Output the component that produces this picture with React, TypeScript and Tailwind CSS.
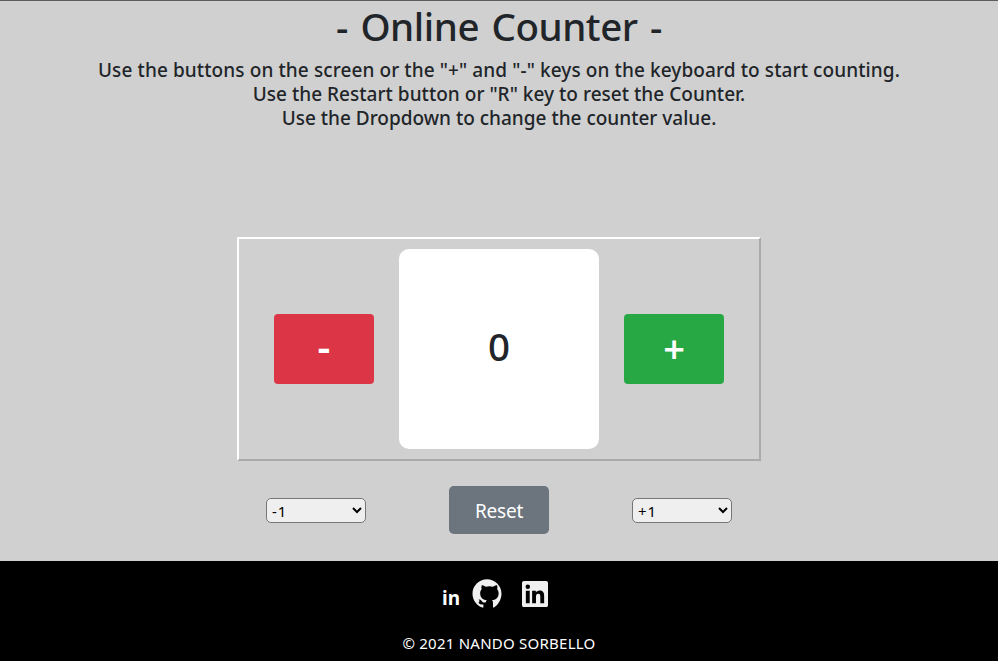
import { useEffect, useState } from "react";

const steps = [1, 2, 5, 10];
const selectClass =
  "h-[25px] w-[100px] rounded-[5px] border border-[#767676] bg-[#efefef] pt-px pl-px text-[15px] tracking-[0.8px] text-black";

function GithubLogo() {
  return (
    <svg viewBox="0 0 24 24" className="mt-px mr-5 h-[29px] w-[30px] text-[#f0f0f0]" fill="currentColor">
      <path d="M12 .297c-6.63 0-12 5.373-12 12 0 5.303 3.438 9.8 8.205 11.385.6.113.82-.258.82-.577 0-.285-.01-1.04-.015-2.04-3.338.724-4.042-1.61-4.042-1.61C6.422 18.07 5.633 17.7 5.633 17.7c-1.087-.744.084-.729.084-.729 1.205.084 1.838 1.236 1.838 1.236 1.07 1.835 2.809 1.305 3.495.998.108-.776.417-1.305.76-1.605-2.665-.3-5.466-1.332-5.466-5.93 0-1.31.465-2.38 1.235-3.22-.135-.303-.54-1.523.105-3.176 0 0 1.005-.322 3.3 1.23.96-.267 1.98-.399 3-.405 1.02.006 2.04.138 3 .405 2.28-1.552 3.285-1.23 3.285-1.23.645 1.653.24 2.873.12 3.176.765.84 1.23 1.91 1.23 3.22 0 4.61-2.805 5.625-5.475 5.92.42.36.81 1.096.81 2.22v3.286c0 .315.21.69.825.57C20.565 22.092 24 17.592 24 12.297c0-6.627-5.373-12-12-12" />
    </svg>
  );
}

function LinkedinLogo() {
  return (
    <svg viewBox="0 0 24 24" className="mt-[3px] size-[26px] text-[#f0f0f0]" fill="currentColor">
      <path d="M20.447 20.452h-3.554v-5.569c0-1.328-.027-3.037-1.852-3.037-1.853 0-2.136 1.445-2.136 2.939v5.667H9.351V9h3.414v1.561h.046c.477-.9 1.637-1.85 3.37-1.85 3.601 0 4.267 2.37 4.267 5.455v6.286zM5.337 7.433a2.062 2.062 0 0 1-2.063-2.065 2.064 2.064 0 1 1 2.063 2.065zm1.782 13.019H3.555V9h3.564v11.452zM22.225 0H1.771C.792 0 0 .774 0 1.729v20.542C0 23.227.792 24 1.771 24h20.451C23.2 24 24 23.227 24 22.271V1.729C24 .774 23.2 0 22.222 0h.003z" />
    </svg>
  );
}

export default function App() {
  const [count, setCount] = useState(0);
  const [down, setDown] = useState(1);
  const [up, setUp] = useState(1);

  useEffect(() => {
    const onKey = (e: KeyboardEvent) => {
      if (e.key === "+") setCount((c) => c + up);
      if (e.key === "-") setCount((c) => c - down);
      if (e.key.toLowerCase() === "r") setCount(0);
    };
    window.addEventListener("keydown", onKey);
    return () => window.removeEventListener("keydown", onKey);
  }, [up, down]);

  return (
    <div className="flex h-screen flex-col overflow-hidden bg-[#d0d0d0] font-['Noto_Sans',sans-serif] text-[#212529]">
      <main className="flex h-[561px] flex-col items-center border-t border-[#5c5c5c] pt-px">
        <h1 className="mb-2 h-12 text-[38.5px] leading-[49px] font-medium tracking-[-0.45px] whitespace-nowrap [word-spacing:2.8px]">
          - Online Counter -
        </h1>
        <h2 className="h-[72px] text-center text-[19px] leading-6 font-medium whitespace-nowrap">
          <span className="tracking-[0.1px]">
            Use the buttons on the screen or the "+" and "-" keys on the keyboard to start counting.
          </span>
          <br />
          <span className="tracking-[0.03px]">Use the Restart button or "R" key to reset the Counter.</span>
          <br />
          <span>Use the Dropdown to change the counter value.</span>
        </h2>
        <section className="mt-[107px] flex h-56 w-[524px] items-center justify-center gap-[25px] border-2 border-t-white border-r-[#aaaaaa] border-b-[#aaaaaa] border-l-white">
          <button
            className="h-[70px] w-[100px] rounded bg-[#dc3545] pb-1 text-[40px] leading-[66px] font-semibold text-white"
            onClick={() => setCount(count - down)}
          >
            -
          </button>
          <div className="flex h-[200px] w-[200px] items-center justify-center rounded-[10px] bg-white pb-[5px] text-[38.5px] font-medium">
            {count}
          </div>
          <button
            className="h-[70px] w-[100px] rounded bg-[#28a745] pb-0.5 text-[38px] leading-[68px] font-semibold text-white"
            onClick={() => setCount(count + up)}
          >
            +
          </button>
        </section>
        <section className="mt-[25px] flex h-12 items-center gap-[83px]">
          <select className={selectClass} value={down} onChange={(e) => setDown(Number(e.target.value))}>
            {steps.map((s) => (
              <option key={s} value={s}>{`-${s}`}</option>
            ))}
          </select>
          <button
            className="h-12 w-[100px] rounded-[4.8px] bg-[#6c757d] text-[19px] leading-[50px] tracking-[-0.2px] text-white"
            onClick={() => setCount(0)}
          >
            Reset
          </button>
          <select className={selectClass} value={up} onChange={(e) => setUp(Number(e.target.value))}>
            {steps.map((s) => (
              <option key={s} value={s}>{`+${s}`}</option>
            ))}
          </select>
        </section>
      </main>
      <footer className="flex h-[100px] flex-col items-center bg-black text-white">
        <div className="mt-[17px] flex h-8 items-start pr-2">
          <span className="mt-2 mr-3 text-[19px] leading-6 font-bold">in</span>
          <GithubLogo />
          <LinkedinLogo />
        </div>
        <p className="mt-[21px] text-[15px] leading-6 tracking-[0.24px] whitespace-nowrap">© 2021 NANDO SORBELLO</p>
      </footer>
    </div>
  );
}
